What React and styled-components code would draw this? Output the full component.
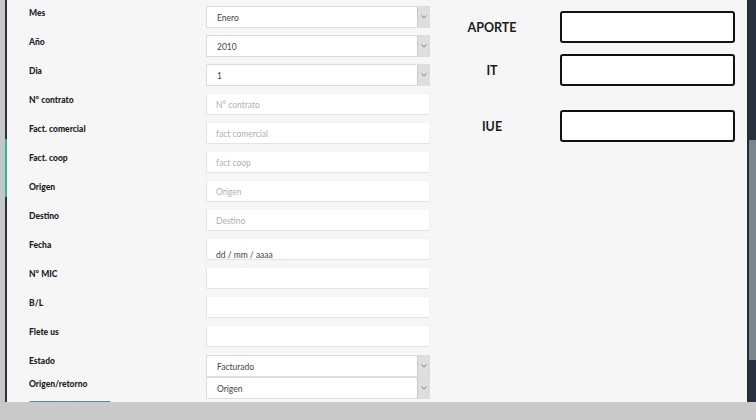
import React from "react";
import styled, { createGlobalStyle } from "styled-components";

const GlobalStyle = createGlobalStyle`
  html, body {
    margin: 0;
    padding: 0;
    background: #c9c9c9;
    font-family: Lato, "Open Sans", sans-serif;
  }
`;

const Screen = styled.div`
  width: 756px;
  height: 420px;
  display: flex;
  flex-direction: column;
  overflow: hidden;
  background: #c9c9c9;
`;

const Viewport = styled.div`
  height: 402px;
  display: flex;
`;

const Gutter = styled.div`
  width: 5px;
  background: #c6c6c6;
`;

const Rail = styled.div`
  width: 2px;
  background: linear-gradient(
    to bottom,
    #27313f 0,
    #27313f 139px,
    #2fb89a 139px,
    #2fb89a 197px,
    #27313f 197px
  );
`;

const Content = styled.div`
  flex: 1;
  background: #f6f6f6;
  display: flex;
  padding-left: 22px;
  overflow: hidden;
`;

const Form = styled.div`
  width: 401px;
  display: flex;
  flex-direction: column;
  padding-top: 6px;
`;

const Row = styled.div`
  display: flex;
  align-items: flex-start;
  height: ${(p) => p.$h || 29}px;
  flex-shrink: 0;
`;

const Label = styled.div`
  width: 177px;
  font-size: 8.5px;
  font-weight: 900;
  color: #1d1d1d;
  line-height: 10px;
  padding-top: ${(p) => p.$top ?? 2}px;
`;

const Field = styled.div`
  width: 224px;
  height: 22px;
  flex-shrink: 0;
  background: #fff;
  border: 1px solid #e4e4e4;
  border-top-color: #f3f3f3;
  border-right-color: #f3f3f3;
  font-size: 8.5px;
  color: ${(p) => (p.$placeholder ? "#b0b0b0" : "#444")};
  padding: ${(p) => (p.$pt ? p.$pt : 6)}px 0 0 9px;
  box-sizing: border-box;
  line-height: 10px;
`;

const Select = styled.div`
  width: 224px;
  height: 22px;
  flex-shrink: 0;
  display: flex;
  box-sizing: border-box;
  border: 1px solid #dcdcdc;
  background: #fff;
`;

const SelectValue = styled.div`
  flex: 1;
  font-size: 8.5px;
  color: #444;
  padding: 6px 0 0 10px;
  line-height: 10px;
`;

const Arrow = styled.div`
  width: 11px;
  background: #dedede;
  border-left: 1px solid #c8c8c8;
  display: flex;
  align-items: center;
  justify-content: center;
`;

const SaveButton = styled.div`
  width: 82px;
  height: 24px;
  margin-top: 1px;
  flex-shrink: 0;
  background: #4a8da3;
  border-radius: 2px;
`;

const Totals = styled.div`
  display: flex;
  flex-direction: column;
  padding-top: 11px;
  padding-left: 9px;
`;

const TotalRow = styled.div`
  display: flex;
  align-items: center;
  margin-top: ${(p) => p.$mt || 0}px;
`;

const TotalLabel = styled.div`
  width: 106px;
  text-align: center;
  font-size: 12.5px;
  font-weight: 700;
  color: #1b1b1b;
  margin-right: 15px;
`;

const TotalBox = styled.div`
  width: 175px;
  height: 32px;
  box-sizing: border-box;
  border: 2.5px solid #111;
  border-radius: 3px;
  background: #fff;
`;

const Scrollbar = styled.div`
  width: 9px;
  display: flex;
`;

const ScrollEdge = styled.div`
  width: 2px;
  background: #222c39;
`;

const ScrollTrack = styled.div`
  flex: 1;
  background: linear-gradient(
    to bottom,
    #27313f 0,
    #27313f 140px,
    #7c858e 140px,
    #7c858e 360px,
    #27313f 360px
  );
`;

const Chevron = () => (
  <svg width="6" height="4" viewBox="0 0 6 4">
    <path d="M0.5 0.5 L3 3 L5.5 0.5" fill="none" stroke="#777" strokeWidth="0.9" />
  </svg>
);

const SelectBox = ({ value }) => (
  <Select>
    <SelectValue>{value}</SelectValue>
    <Arrow>
      <Chevron />
    </Arrow>
  </Select>
);

const fields = [
  { label: "N° contrato", ph: "N° contrato" },
  { label: "Fact. comercial", ph: "fact comercial" },
  { label: "Fact. coop", ph: "fact coop" },
  { label: "Origen", ph: "Origen" },
  { label: "Destino", ph: "Destino" },
];

export default function App() {
  return (
    <>
      <GlobalStyle />
      <Screen>
        <Viewport>
          <Gutter />
          <Rail />
          <Content>
            <Form>
              <Row>
                <Label>Mes</Label>
                <SelectBox value="Enero" />
              </Row>
              <Row>
                <Label>Año</Label>
                <SelectBox value="2010" />
              </Row>
              <Row>
                <Label>Dia</Label>
                <SelectBox value="1" />
              </Row>
              {fields.map((f) => (
                <Row key={f.label}>
                  <Label>{f.label}</Label>
                  <Field $placeholder>{f.ph}</Field>
                </Row>
              ))}
              <Row>
                <Label>Fecha</Label>
                <Field $pt={11}>dd / mm / aaaa</Field>
              </Row>
              <Row>
                <Label>N° MIC</Label>
                <Field />
              </Row>
              <Row>
                <Label>B/L</Label>
                <Field />
              </Row>
              <Row $h={30}>
                <Label>Flete us</Label>
                <Field />
              </Row>
              <Row $h={22}>
                <Label $top={1}>Estado</Label>
                <SelectBox value="Facturado" />
              </Row>
              <Row $h={23}>
                <Label $top={2}>Origen/retorno</Label>
                <SelectBox value="Origen" />
              </Row>
              <SaveButton />
            </Form>
            <Totals>
              <TotalRow>
                <TotalLabel>APORTE</TotalLabel>
                <TotalBox />
              </TotalRow>
              <TotalRow $mt={11}>
                <TotalLabel>IT</TotalLabel>
                <TotalBox />
              </TotalRow>
              <TotalRow $mt={24}>
                <TotalLabel>IUE</TotalLabel>
                <TotalBox />
              </TotalRow>
            </Totals>
          </Content>
          <Scrollbar>
            <ScrollEdge />
            <ScrollTrack />
          </Scrollbar>
        </Viewport>
      </Screen>
    </>
  );
}
